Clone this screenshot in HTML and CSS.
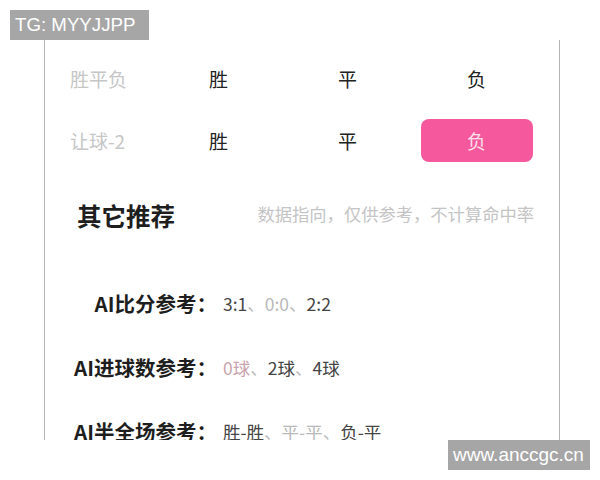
FILE: index.html
```html
<!DOCTYPE html>
<html lang="zh-CN">
  <head>
    <meta charset="UTF-8" />
    <meta name="viewport" content="width=device-width, initial-scale=1.0" />
    <title>AI推荐</title>
    <link rel="stylesheet" href="styles.css">
  </head>
  <body>
    <div class="panel">
      <div class="odds-row">
        <span class="odds-label">胜平负</span>
        <span class="pick">胜</span>
        <span class="pick">平</span>
        <span class="pick">负</span>
      </div>
      <div class="odds-row">
        <span class="odds-label">让球-2</span>
        <span class="pick">胜</span>
        <span class="pick">平</span>
        <span class="pick"><span class="pick-on">负</span></span>
      </div>

      <div class="section-head">
        <h2>其它推荐</h2>
        <span class="note">数据指向，仅供参考，不计算命中率</span>
      </div>

      <div class="ai-list">
        <div class="ai-row">
          <span class="ai-label">AI比分参考：</span>
          <span class="ai-value">3:1<span class="sep">、</span><span class="dim">0:0</span><span class="sep">、</span>2:2</span>
        </div>
        <div class="ai-row">
          <span class="ai-label">AI进球数参考：</span>
          <span class="ai-value"><span class="rose">0球</span><span class="sep">、</span>2球<span class="sep">、</span>4球</span>
        </div>
        <div class="ai-row">
          <span class="ai-label">AI半全场参考：</span>
          <span class="ai-value">胜-胜<span class="sep">、</span><span class="dim">平-平</span><span class="sep">、</span>负-平</span>
        </div>
      </div>
    </div>

    <div class="mark mark-top">TG: MYYJJPP</div>
    <div class="mark mark-bottom">www.anccgc.cn</div>
  </body>
</html>
```

FILE: styles.css
```css
body {
  margin: 0;
  background-color: #fff;
  font-family: "Noto Sans CJK SC", "Liberation Sans", sans-serif;
  color: #222;
}
.panel {
  width: 516px;
  height: 400px;
  margin: 40px 0 0 44px;
  padding-top: 7px;
  box-sizing: border-box;
  border-left: 1px solid #b4b4b4;
  border-right: 1px solid #b4b4b4;
  overflow: hidden;
}
.odds-row {
  display: grid;
  grid-template-columns: 84px repeat(3, 129px);
  align-items: center;
  height: 62px;
  padding-left: 25px;
  font-size: 19px;
}
.odds-label {
  color: #c6c6c6;
  white-space: nowrap;
}
.pick {
  display: flex;
  justify-content: center;
  align-items: center;
}
.pick-on {
  display: flex;
  justify-content: center;
  align-items: center;
  width: 112px;
  height: 43px;
  border-radius: 8px;
  background-color: #f5589c;
  color: #fde0ec;
}
.section-head {
  display: flex;
  justify-content: space-between;
  align-items: center;
  height: 44px;
  margin-top: 22px;
  padding: 0 25px 0 32px;
}
.section-head h2 {
  margin: 0;
  font-size: 24.5px;
  font-weight: bold;
  color: #1e1e1e;
}
.note {
  font-size: 17.3px;
  color: #c4c4c4;
  margin-top: -3px;
}
.ai-list {
  margin-top: 34px;
}
.ai-row {
  display: grid;
  grid-template-columns: 172px 1fr;
  column-gap: 6px;
  align-items: center;
  height: 64px;
}
.ai-label {
  text-align: right;
  font-size: 20.5px;
  font-weight: bold;
  color: #1e1e1e;
  white-space: nowrap;
}
.ai-value {
  font-size: 17.5px;
  color: #444;
  white-space: nowrap;
}
.sep {
  color: #bbb;
}
.dim {
  color: #b8b8b8;
}
.rose {
  color: #c9a3ad;
}
.mark {
  position: absolute;
  background-color: #a6a6a6;
  color: #fff;
  font-family: "Liberation Sans", Arial, sans-serif;
  line-height: 30px;
}
.mark-top {
  left: 10px;
  top: 10px;
  width: 139px;
  height: 30px;
  padding-left: 5px;
  box-sizing: border-box;
  font-size: 18.7px;
}
.mark-bottom {
  left: 448px;
  top: 440px;
  width: 142px;
  height: 30px;
  padding-left: 5px;
  box-sizing: border-box;
  font-size: 19px;
}
```
